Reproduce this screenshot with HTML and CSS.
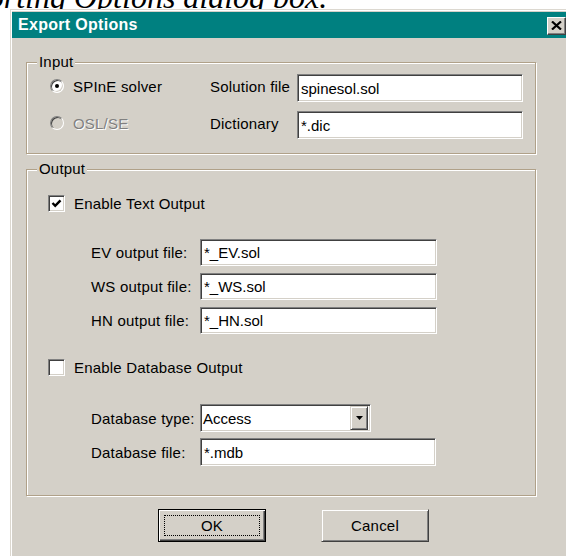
FILE: index.html
```html
<!DOCTYPE html>
<html>
<head>
<meta charset="utf-8">
<title>Export Options</title>
<link rel="stylesheet" href="styles.css">
</head>
<body>
<div class="caption"><p>Exporting Options dialog box.</p></div>
<div class="dialog">
  <div class="titlebar">
    <span class="title">Export Options</span>
    <span class="close">
      <svg width="11" height="9" viewBox="0 0 11 9"><path d="M1 0.5 L10 8.5 M10 0.5 L1 8.5" stroke="#000" stroke-width="2.2" fill="none"/></svg>
    </span>
  </div>
  <div class="body">
    <fieldset class="group group-input">
      <legend>Input</legend>
      <div class="group-body">
        <div class="src-row">
          <span class="radio-opt"><span class="radio on"></span>SPInE solver</span>
          <span class="field-label">Solution file</span>
          <span class="edit edit-src">spinesol.sol</span>
        </div>
        <div class="src-row">
          <span class="radio-opt disabled"><span class="radio"></span>OSL/SE</span>
          <span class="field-label">Dictionary</span>
          <span class="edit edit-src">*.dic</span>
        </div>
      </div>
    </fieldset>

    <fieldset class="group group-output">
      <legend>Output</legend>
      <div class="group-body">
        <div class="check-opt">
          <span class="check"><svg width="13" height="13" viewBox="0 0 13 13"><path d="M2.5 6 L5.2 8.8 L10.5 3.3" stroke="#000" stroke-width="2.4" fill="none"/></svg></span>
          Enable Text Output
        </div>
        <div class="fields fields-text">
          <span class="field-label">EV output file:</span><span class="edit edit-out">*_EV.sol</span>
          <span class="field-label">WS output file:</span><span class="edit edit-out">*_WS.sol</span>
          <span class="field-label">HN output file:</span><span class="edit edit-out">*_HN.sol</span>
        </div>
        <div class="check-opt check-db">
          <span class="check"></span>
          Enable Database Output
        </div>
        <div class="fields fields-db">
          <span class="field-label">Database type:</span>
          <span class="edit combo">Access<span class="drop"><svg width="7" height="4" viewBox="0 0 7 4"><path d="M0 0 H7 L3.5 4 Z" fill="#000"/></svg></span></span>
          <span class="field-label">Database file:</span><span class="edit edit-out">*.mdb</span>
        </div>
      </div>
    </fieldset>

    <div class="buttons">
      <span class="btn btn-default"><span class="focus">OK</span></span>
      <span class="btn">Cancel</span>
    </div>
  </div>
</div>
</body>
</html>
```

FILE: styles.css
```css
html, body {
  margin: 0;
  padding: 0;
}

body {
  width: 566px;
  height: 556px;
  overflow: hidden;
  background: #fff;
  color: #000;
  font-family: "Liberation Sans", Arial, sans-serif;
  font-size: 15px;
  letter-spacing: 0.2px;
}

/* document line running behind the top of the window */
.caption {
  height: 9px;
  overflow: hidden;
}

.caption p {
  margin: -19px 0 0;
  font: italic 32px/32px "Liberation Serif", "Times New Roman", serif;
  letter-spacing: 0;
  white-space: nowrap;
  text-indent: -62px;
}

/* window frame */
.dialog {
  margin-left: 10px;
  width: 560px;
  height: 560px;
  box-sizing: border-box;
  background: #d4d0c8;
  border-top: 1px solid #dcd8d0;
  border-left: 1px solid #dcd8d0;
  box-shadow: inset 1px 1px 0 #fff;
  padding: 2px 0 0 1px;
}

.titlebar {
  display: flex;
  align-items: center;
  height: 26px;
  background: #008080;
  padding: 0 4px 0 6px;
}

.title {
  flex: 1;
  color: #fff;
  font-weight: bold;
  font-size: 16px;
  letter-spacing: 0.3px;
}

.close {
  width: 19px;
  height: 18px;
  margin-top: 1px;
  box-sizing: border-box;
  display: flex;
  align-items: center;
  justify-content: center;
  background: #d4d0c8;
  border-top: 1px solid #fff;
  border-left: 1px solid #fff;
  border-right: 1px solid #404040;
  border-bottom: 1px solid #404040;
  box-shadow: inset -1px -1px 0 #808080;
}

.body {
  padding: 17px 0 0 14px;
}

/* etched group boxes */
.group {
  margin: 0;
  padding: 0;
  width: 510px;
  min-inline-size: 0;
  box-sizing: border-box;
  border: 1px solid #b0a189;
  box-shadow: inset 1px 1px 0 #fff, 1px 1px 0 #fff;
}

.group legend {
  margin-left: 10px;
  padding: 0 2px;
  line-height: 14px;
  background: #d4d0c8;
}

.group-input .group-body {
  padding: 5px 11px 14px 23px;
}

.group-output {
  margin-top: 8px;
}

.group-output .group-body {
  padding: 19px 11px 29px 21px;
}

/* input source rows */
.src-row {
  display: flex;
  align-items: center;
  height: 28px;
}

.src-row + .src-row {
  margin-top: 9px;
}

.radio-opt {
  width: 160px;
  display: flex;
  align-items: center;
  gap: 9px;
  margin-top: -4px;
}

.radio-opt.disabled {
  color: #808080;
  text-shadow: 1px 1px 0 #fff;
}

.radio {
  width: 14px;
  height: 14px;
  box-sizing: border-box;
  border-radius: 50%;
  border: 1px solid;
  border-color: #808080 #fff #fff #808080;
  box-shadow: inset 1px 1px 0 #404040, inset -1px -1px 0 #d4d0c8;
  background: #d4d0c8;
  display: flex;
  align-items: center;
  justify-content: center;
}

.radio.on {
  background: #fff;
}

.radio.on::after {
  content: "";
  width: 4px;
  height: 4px;
  border-radius: 50%;
  background: #000;
}

.src-row .field-label {
  width: 87px;
  margin-top: -4px;
}

/* sunken edit fields */
.edit {
  box-sizing: border-box;
  display: flex;
  align-items: center;
  background: #fff;
  border-top: 1px solid #808080;
  border-left: 1px solid #808080;
  border-right: 1px solid #fff;
  border-bottom: 1px solid #fff;
  box-shadow: inset 1px 1px 0 #404040, inset -1px -1px 0 #d4d0c8;
  padding-left: 3px;
  white-space: nowrap;
  letter-spacing: 0;
}

.edit-src {
  width: 226px;
  height: 28px;
}

.edit-out {
  width: 237px;
}

/* check boxes */
.check-opt {
  display: flex;
  align-items: center;
  gap: 9px;
  height: 17px;
}

.check {
  width: 17px;
  height: 17px;
  box-sizing: border-box;
  display: flex;
  align-items: center;
  justify-content: center;
  background: #fff;
  border-top: 1px solid #808080;
  border-left: 1px solid #808080;
  border-right: 1px solid #fff;
  border-bottom: 1px solid #fff;
  box-shadow: inset 1px 1px 0 #404040, inset -1px -1px 0 #d4d0c8;
}

.check-db {
  margin-top: 25px;
}

/* labelled field grids */
.fields {
  display: grid;
  grid-template-columns: 109px auto;
  justify-content: start;
  align-items: center;
  margin-left: 43px;
}

.fields-text {
  margin-top: 27px;
  grid-auto-rows: 27px;
  row-gap: 7px;
}

.fields-db {
  margin-top: 28px;
  grid-auto-rows: 28px;
  row-gap: 6px;
}

.fields .edit {
  height: 100%;
}

.fields-db .edit-out {
  width: 236px;
}

.combo {
  width: 171px;
  padding-left: 2px;
  justify-content: space-between;
  padding-right: 2px;
}

.drop {
  width: 18px;
  height: 24px;
  box-sizing: border-box;
  display: flex;
  align-items: center;
  justify-content: center;
  background: #d4d0c8;
  border-top: 1px solid #d4d0c8;
  border-left: 1px solid #d4d0c8;
  border-right: 1px solid #404040;
  border-bottom: 1px solid #404040;
  box-shadow: inset 1px 1px 0 #fff, inset -1px -1px 0 #808080;
}

/* push buttons */
.buttons {
  display: flex;
  gap: 55px;
  margin: 13px 0 0 132px;
}

.btn {
  width: 108px;
  height: 33px;
  box-sizing: border-box;
  display: flex;
  align-items: center;
  justify-content: center;
  background: #d4d0c8;
  border-top: 1px solid #d4d0c8;
  border-left: 1px solid #d4d0c8;
  border-right: 1px solid #404040;
  border-bottom: 1px solid #404040;
  box-shadow: inset 1px 1px 0 #fff, inset -1px -1px 0 #808080;
}

.btn-default {
  border: 1px solid #000;
  box-shadow: inset 1px 1px 0 #fff, inset -1px -1px 0 #404040, inset -2px -2px 0 #808080;
  padding: 5px;
}

.focus {
  flex: 1;
  align-self: stretch;
  display: flex;
  align-items: center;
  justify-content: center;
  border: 1px dotted #000;
}
```
